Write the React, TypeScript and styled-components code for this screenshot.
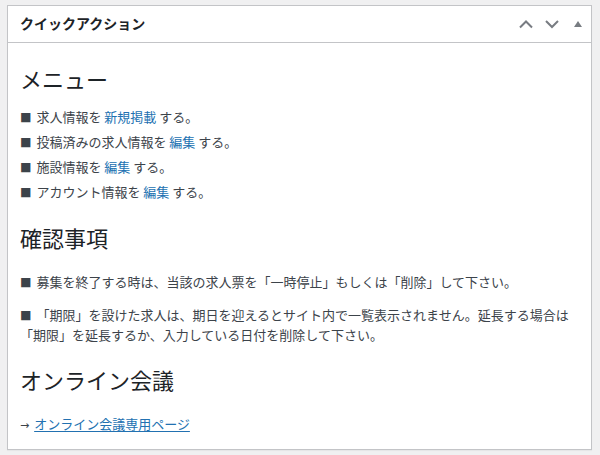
import styled, { createGlobalStyle } from "styled-components";

const GlobalStyle = createGlobalStyle`
  html, body {
    margin: 0;
    padding: 0;
    background: #f0f0f1;
  }
  body {
    font-family: "Noto Sans CJK JP", "Noto Sans", sans-serif;
    color: #3c434a;
  }
`;

const Page = styled.div`
  padding: 5px 8px 6px 7px;
`;

const Postbox = styled.section`
  background: #fff;
  border: 1px solid #c3c4c7;
  box-shadow: 0 1px 1px rgba(0, 0, 0, 0.04);
`;

const PostboxHeader = styled.div`
  display: flex;
  align-items: center;
  justify-content: space-between;
  height: 36px;
  padding-left: 12px;
  border-bottom: 1px solid #c3c4c7;
`;

const Title = styled.h2`
  margin: 0;
  font-size: 14px;
  font-weight: 700;
  color: #1d2327;
  line-height: 1.4;
`;

const Actions = styled.div`
  display: flex;
  align-items: center;
  height: 100%;
`;

const HandleButton = styled.button`
  display: flex;
  align-items: center;
  justify-content: center;
  width: 26px;
  height: 100%;
  padding: 0;
  border: 0;
  background: none;
  color: #787c82;
  cursor: pointer;
`;

const Inside = styled.div`
  padding: 0 12px 15px;
`;

const Heading = styled.h2<{ $gap: number }>`
  margin: ${(p) => p.$gap}px 0 0;
  font-size: 22px;
  font-weight: 400;
  line-height: 28px;
  color: #1d2327;
`;

const MenuList = styled.ul`
  list-style: none;
  margin: 15px 0 0;
  padding: 0;
`;

const MenuItem = styled.li`
  font-size: 13px;
  line-height: 19px;
  margin-bottom: 6px;
`;

const Note = styled.p<{ $gap: number }>`
  margin: ${(p) => p.$gap}px 0 0;
  font-size: 13px;
  line-height: 20px;
`;

const Bullet = styled.span`
  font-size: 11.5px;
  line-height: 1;
  margin-right: 2px;
  color: #3c434a;
`;

const InlineLink = styled.a`
  color: #2271b1;
  text-decoration: none;
`;

const PageLink = styled.a`
  color: #2271b1;
  text-decoration: underline;
  text-underline-offset: 2px;
`;

const Arrow = styled.span`
  font-family: "DejaVu Sans", sans-serif;
  font-size: 11px;
  line-height: 1;
  margin-right: 2px;
  color: #3c434a;
`;

const Chevron = ({ up }: { up?: boolean }) => (
  <svg width="16" height="10" viewBox="0 0 16 10" aria-hidden="true">
    <path
      d={up ? "M2 8.5 L8 2.5 L14 8.5" : "M2 2 L8 8 L14 2"}
      fill="none"
      stroke="currentColor"
      strokeWidth="2"
    />
  </svg>
);

const Triangle = () => (
  <svg width="10" height="8" viewBox="0 0 10 8" aria-hidden="true">
    <path d="M1 7 L5 1 L9 7 Z" fill="#787c82" />
  </svg>
);

const menu = [
  { before: "求人情報を", link: "新規掲載" },
  { before: "投稿済みの求人情報を", link: "編集" },
  { before: "施設情報を", link: "編集" },
  { before: "アカウント情報を", link: "編集" },
];

export default function App() {
  return (
    <>
      <GlobalStyle />
      <Page>
        <Postbox>
          <PostboxHeader>
            <Title>クイックアクション</Title>
            <Actions>
              <HandleButton type="button" aria-label="上へ移動">
                <Chevron up />
              </HandleButton>
              <HandleButton type="button" aria-label="下へ移動">
                <Chevron />
              </HandleButton>
              <HandleButton type="button" aria-label="パネルを切り替え">
                <Triangle />
              </HandleButton>
            </Actions>
          </PostboxHeader>
          <Inside>
            <Heading $gap={21}>メニュー</Heading>
            <MenuList>
              {menu.map((m) => (
                <MenuItem key={m.before}>
                  <Bullet>■</Bullet> {m.before}{" "}
                  <InlineLink href="#">{m.link}</InlineLink> する。
                </MenuItem>
              ))}
            </MenuList>
            <Heading $gap={22}>確認事項</Heading>
            <Note $gap={21}>
              <Bullet>■</Bullet> 募集を終了する時は、当該の求人票を「一時停止」もしくは「削除」して下さい。
            </Note>
            <Note $gap={13}>
              <Bullet>■</Bullet> 「期限」を設けた求人は、期日を迎えるとサイト内で一覧表示されません。延長する場合は「期限」を延長するか、入力している日付を削除して下さい。
            </Note>
            <Heading $gap={20}>オンライン会議</Heading>
            <Note $gap={21}>
              <Arrow>→</Arrow> <PageLink href="#">オンライン会議専用ページ</PageLink>
            </Note>
          </Inside>
        </Postbox>
      </Page>
    </>
  );
}
